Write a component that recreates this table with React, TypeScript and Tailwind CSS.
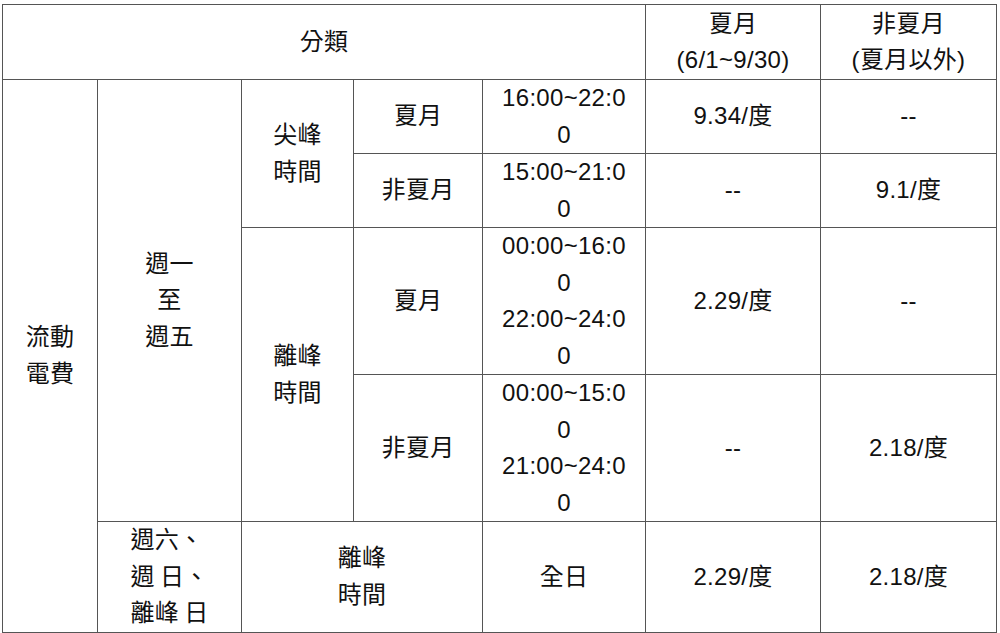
import React from 'react';

const cell = 'border border-[#555] text-center align-middle p-0';

function Lines({ items }: { items: string[] }) {
  return (
    <>
      {items.map((t, i) => (
        <div key={i}>{t}</div>
      ))}
    </>
  );
}

export default function App() {
  return (
    <div className="bg-white w-[1000px] h-[633px] pt-[4px] pl-[2px]">
      <table
        className="table-fixed border-collapse w-[994px] text-[24px] leading-[36.5px] text-[#111] tracking-[0.3px]"
        style={{ fontFamily: '"Liberation Sans", "Noto Sans CJK TC", sans-serif' }}
      >
        <colgroup>
          <col className="w-[95px]" />
          <col className="w-[144px]" />
          <col className="w-[112px]" />
          <col className="w-[129px]" />
          <col className="w-[163px]" />
          <col className="w-[175px]" />
          <col className="w-[176px]" />
        </colgroup>
        <tbody>
          {/* Header */}
          <tr className="h-[75px]">
            <td colSpan={5} className={cell}>分類</td>
            <td className={cell}>
              <Lines items={['夏月', '(6/1~9/30)']} />
            </td>
            <td className={cell}>
              <Lines items={['非夏月', '(夏月以外)']} />
            </td>
          </tr>

          {/* 尖峰 夏月 */}
          <tr className="h-[74px]">
            <td rowSpan={5} className={cell}>
              <Lines items={['流動', '電費']} />
            </td>
            <td rowSpan={4} className={cell}>
              <Lines items={['週一', '至', '週五']} />
            </td>
            <td rowSpan={2} className={cell}>
              <Lines items={['尖峰', '時間']} />
            </td>
            <td className={cell}>夏月</td>
            <td className={cell}>
              <Lines items={['16:00~22:0', '0']} />
            </td>
            <td className={cell}>9.34/度</td>
            <td className={cell}>--</td>
          </tr>

          {/* 尖峰 非夏月 */}
          <tr className="h-[74px]">
            <td className={cell}>非夏月</td>
            <td className={cell}>
              <Lines items={['15:00~21:0', '0']} />
            </td>
            <td className={cell}>--</td>
            <td className={cell}>9.1/度</td>
          </tr>

          {/* 離峰 夏月 */}
          <tr className="h-[147px]">
            <td rowSpan={2} className={cell}>
              <Lines items={['離峰', '時間']} />
            </td>
            <td className={cell}>夏月</td>
            <td className={cell}>
              <Lines items={['00:00~16:0', '0', '22:00~24:0', '0']} />
            </td>
            <td className={cell}>2.29/度</td>
            <td className={cell}>--</td>
          </tr>

          {/* 離峰 非夏月 */}
          <tr className="h-[146px]">
            <td className={cell}>非夏月</td>
            <td className={cell}>
              <Lines items={['00:00~15:0', '0', '21:00~24:0', '0']} />
            </td>
            <td className={cell}>--</td>
            <td className={cell}>2.18/度</td>
          </tr>

          {/* 週末 */}
          <tr className="h-[109px]">
            <td className={cell}>
              <div className="inline-block text-left">
                <Lines items={['週六、', '週\u2009日、', '離峰\u2009日']} />
              </div>
            </td>
            <td colSpan={2} className={cell}>
              <Lines items={['離峰', '時間']} />
            </td>
            <td className={cell}>全日</td>
            <td className={cell}>2.29/度</td>
            <td className={cell}>2.18/度</td>
          </tr>
        </tbody>
      </table>
    </div>
  );
}
